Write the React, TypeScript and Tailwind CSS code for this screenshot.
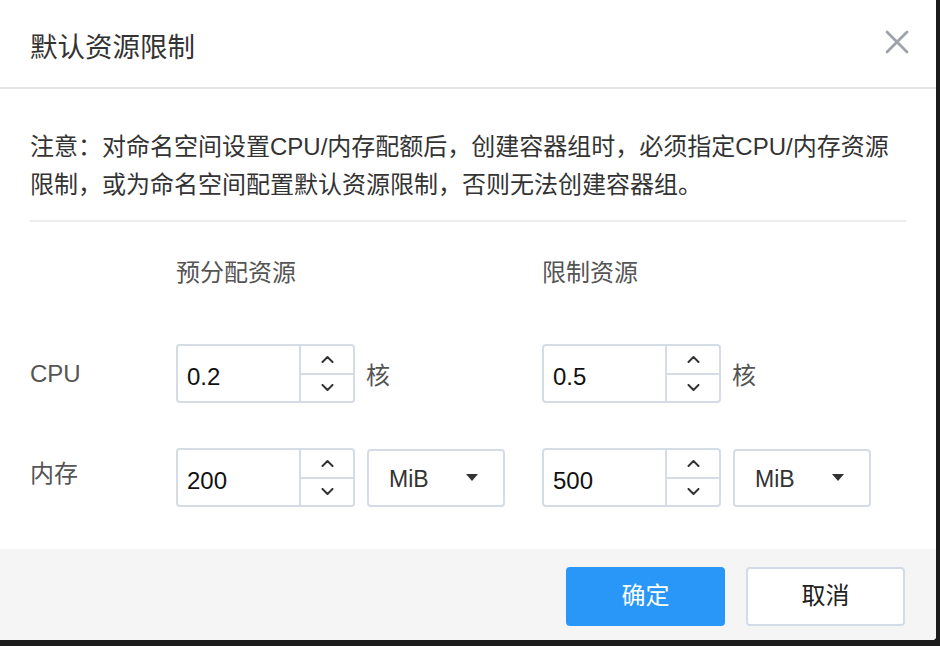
import React from "react";

const font = { fontFamily: '"Liberation Sans", "Noto Sans CJK SC", sans-serif' };

function Chevron({ up }: { up?: boolean }) {
  return (
    <svg width="13" height="8" viewBox="0 0 13 8" fill="none">
      <path
        d={up ? "M1.5 7 L6.5 2 L11.5 7" : "M1.5 1 L6.5 6 L11.5 1"}
        stroke="#333"
        strokeWidth="2"
        strokeLinecap="round"
        strokeLinejoin="round"
      />
    </svg>
  );
}

function NumInput({ value }: { value: string }) {
  return (
    <div className="flex w-[179px] h-[59px] border-2 border-[#d5dce6] rounded-[4px] bg-white">
      <div className="flex-1 flex items-center pl-[9px] pt-[6px] text-[24px] text-[#111]">{value}</div>
      <div className="w-[54px] border-l-2 border-[#d5dce6] flex flex-col">
        <div className="flex-1 flex items-center justify-center border-b-2 border-[#d5dce6]">
          <Chevron up />
        </div>
        <div className="flex-1 flex items-center justify-center">
          <Chevron />
        </div>
      </div>
    </div>
  );
}

function Select() {
  return (
    <div className="ml-[12px] flex items-center justify-between w-[138px] h-[58px] border-2 border-[#d5dce6] rounded-[4px] bg-white pl-[20px] pr-[25px] text-[23px] text-[#333]">
      <span className="pt-[3px]">MiB</span>
      <svg width="12" height="8" viewBox="0 0 12 8">
        <path d="M0 0 H12 L6 7 Z" fill="#333" />
      </svg>
    </div>
  );
}

export default function App() {
  return (
    <div className="w-[940px] h-[646px] bg-[#1c1c1c]" style={font}>
      <div className="w-[936px] h-[640px] bg-white flex flex-col overflow-hidden rounded-br-[4px]">
        <div className="h-[89px] shrink-0 border-b-2 border-[#e4e4e4] flex items-center justify-between pl-[30px] pr-[27px]">
          <span className="text-[27.5px] text-[#333] pt-[8px]">默认资源限制</span>
          <svg width="24" height="24" viewBox="0 0 24 24" className="mb-[4px]">
            <path d="M2 2 L22 22 M22 2 L2 22" stroke="#9ea2a9" strokeWidth="2.8" strokeLinecap="round" />
          </svg>
        </div>
        <div className="flex-1 px-[30px]">
          <div className="pt-[39px] pb-[16px] border-b-2 border-[#ececec] text-[24px] leading-[38px] text-[#333]">
            注意：对命名空间设置CPU/内存配额后，创建容器组时，必须指定CPU/内存资源限制，或为命名空间配置默认资源限制，否则无法创建容器组。
          </div>
          <div className="mt-[36px] flex text-[24px] leading-[30px] text-[#555]">
            <div className="w-[146px]" />
            <div className="w-[366px]">预分配资源</div>
            <div>限制资源</div>
          </div>
          <div className="mt-[56px] flex items-center">
            <div className="w-[146px] text-[24px] text-[#555]">CPU</div>
            <div className="w-[366px] flex items-center">
              <NumInput value="0.2" />
              <span className="ml-[11px] pt-[4px] text-[24px] text-[#555]">核</span>
            </div>
            <div className="flex items-center">
              <NumInput value="0.5" />
              <span className="ml-[11px] pt-[4px] text-[24px] text-[#555]">核</span>
            </div>
          </div>
          <div className="mt-[45px] flex items-center">
            <div className="w-[146px] text-[24px] text-[#555] pb-[8px]">内存</div>
            <div className="w-[366px] flex items-center">
              <NumInput value="200" />
              <Select />
            </div>
            <div className="flex items-center">
              <NumInput value="500" />
              <Select />
            </div>
          </div>
        </div>
        <div className="h-[91px] shrink-0 bg-[#f5f5f6] flex items-center justify-end gap-[21px] pr-[31px] pt-[3px]">
          <button className="w-[159px] h-[59px] rounded-[4px] bg-[#2997f8] text-white text-[24px]">确定</button>
          <button className="w-[159px] h-[59px] rounded-[4px] bg-white border-2 border-[#d3dbe6] text-[#222] text-[24px]">取消</button>
        </div>
      </div>
    </div>
  );
}
